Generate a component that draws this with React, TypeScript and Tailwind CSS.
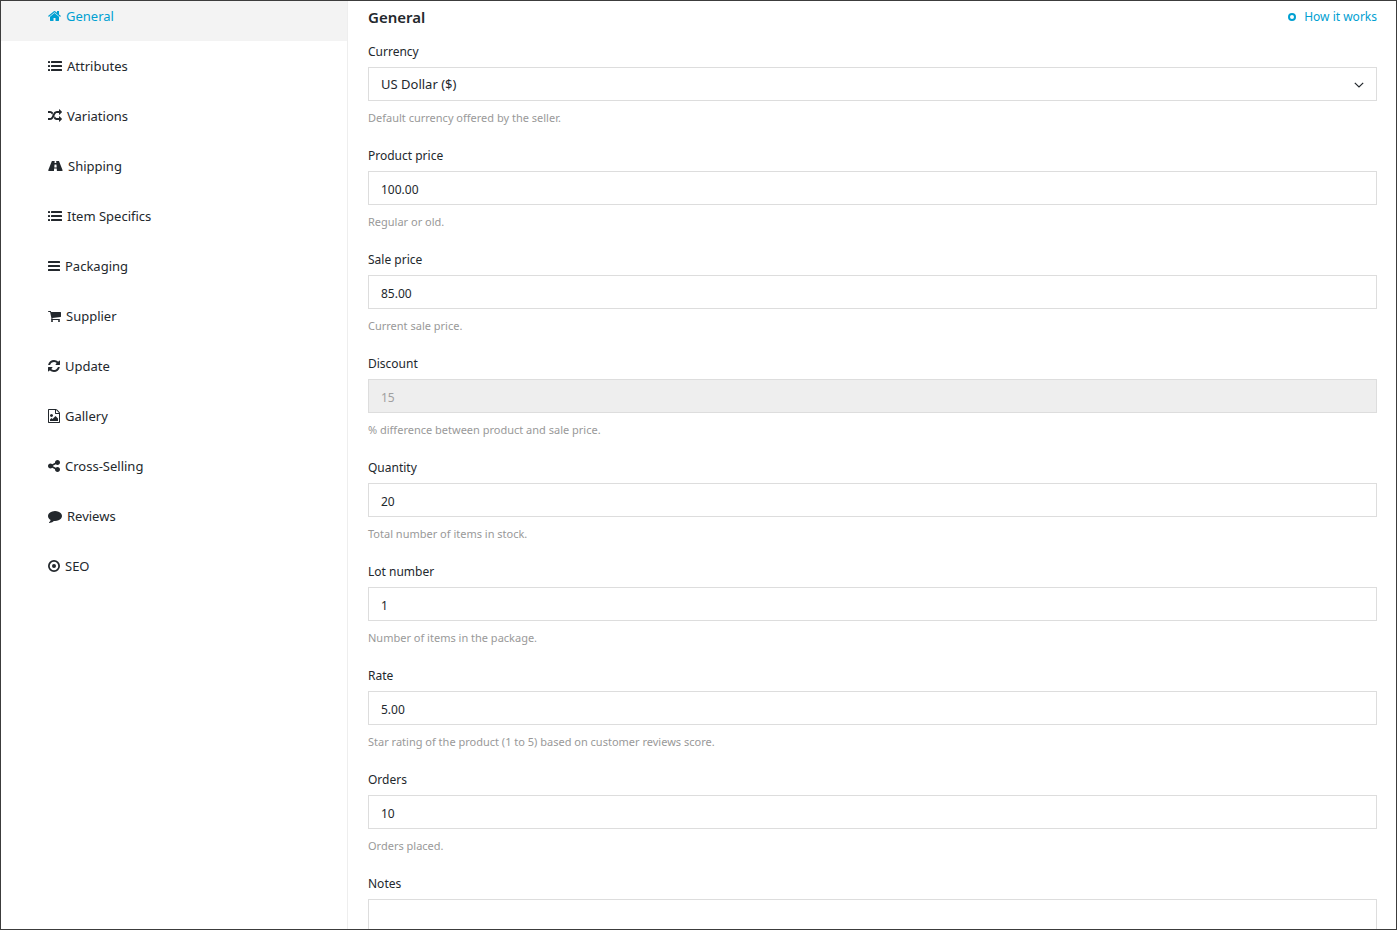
import React from "react";

type IconProps = { box: string; width: number; children: React.ReactNode };

function Icon({ box, width, children }: IconProps) {
  return (
    <svg viewBox={box} width={width} height={14} fill="currentColor" aria-hidden="true" className="shrink-0">
      {children}
    </svg>
  );
}

const WIDE = "0 0 1792 1792";
const MID = "64 0 1664 1792";
const SLIM = "128 0 1536 1792";

const HomeIcon = () => (
  <Icon box={MID} width={13}>
    <path d="M1472 992v480q0 26-19 45t-45 19h-384v-384h-256v384h-384q-26 0-45-19t-19-45v-480q0-1 .5-3t.5-3l575-474 575 474q1 2 1 6zm223-69l-62 74q-8 9-21 11h-3q-13 0-21-7l-692-577-692 577q-12 8-24 7-13-2-21-11l-62-74q-8-10-7-23.5t11-21.5l719-599q32-26 76-26t76 26l244 204v-195q0-14 9-23t23-9h192q14 0 23 9t9 23v408l219 182q10 8 11 21.5t-7 23.5z" />
  </Icon>
);

const ListIcon = () => (
  <Icon box={WIDE} width={14}>
    <rect x="0" y="256" width="256" height="256" rx="32" />
    <rect x="0" y="768" width="256" height="256" rx="32" />
    <rect x="0" y="1280" width="256" height="256" rx="32" />
    <rect x="384" y="256" width="1408" height="256" rx="32" />
    <rect x="384" y="768" width="1408" height="256" rx="32" />
    <rect x="384" y="1280" width="1408" height="256" rx="32" />
  </Icon>
);

const RandomIcon = () => (
  <Icon box={WIDE} width={14}>
    <path d="M666 481q-60 92-137 273-22-45-37-72.5t-40.5-63.5-51-56.5-63-35-81.5-14.5h-224q-14 0-23-9t-9-23v-192q0-14 9-23t23-9h224q250 0 410 225zm1126 799q0 14-9 23l-320 320q-9 9-23 9-13 0-22.5-9.5t-9.5-22.5v-192q-32 0-85 .5t-81 1-73-1-71-5-64-10.5-63-18.5-58-28.5-59-40-55-53.5-56-69.5q59-93 136-273 22 45 37 72.5t40.5 63.5 51 56.5 63 35 81.5 14.5h256v-192q0-14 9-23t23-9q12 0 24 10l319 319q9 9 9 23zm0-896q0 14-9 23l-320 320q-9 9-23 9-13 0-22.5-9.5t-9.5-22.5v-192h-256q-48 0-87 15t-69 45-51 61.5-45 77.5q-32 62-78 171-29 66-49.5 111t-54 105-64 100-74 83-90 68.5-106.5 42-128 16.5h-224q-14 0-23-9t-9-23v-192q0-14 9-23t23-9h224q48 0 87-15t69-45 51-61.5 45-77.5q32-62 78-171 29-66 49.5-111t54-105 64-100 74-83 90-68.5 106.5-42 128-16.5h256v-192q0-14 9-23t23-9q12 0 24 10l319 319q9 9 9 23z" />
  </Icon>
);

const RoadIcon = () => (
  <Icon box="0 0 1920 1792" width={15}>
    <path d="M1111 1056v-4l-24-320q-1-13-11-22.5t-23-9.5h-186q-13 0-23 9.5t-11 22.5l-24 320v4q-1 12 8 20t21 8h244q12 0 21-8t8-20zm749 407q0 73-46 73h-704q13 0 22-9.5t8-22.5l-20-256q-1-13-11-22.5t-23-9.5h-272q-13 0-23 9.5t-11 22.5l-20 256q-1 13 8 22.5t22 9.5h-704q-46 0-46-73 0-54 26-116l417-1044q8-19 26-33t38-14h339q-13 0-23 9.5t-11 22.5l-15 192q-1 14 8 23t22 9h166q13 0 22-9t8-23l-15-192q-1-13-11-22.5t-23-9.5h339q20 0 38 14t26 33l417 1044q26 62 26 116z" />
  </Icon>
);

const BarsIcon = () => (
  <Icon box={SLIM} width={12}>
    <rect x="128" y="256" width="1536" height="256" rx="32" />
    <rect x="128" y="768" width="1536" height="256" rx="32" />
    <rect x="128" y="1280" width="1536" height="256" rx="32" />
  </Icon>
);

const CartIcon = () => (
  <Icon box={MID} width={13}>
    <path d="M704 1536q0 52-38 90t-90 38-90-38-38-90 38-90 90-38 90 38 38 90zm896 0q0 52-38 90t-90 38-90-38-38-90 38-90 90-38 90 38 38 90zm128-1088v512q0 24-16.5 42.5t-40.5 21.5l-1044 122q13 60 13 70 0 16-24 64h920q26 0 45 19t19 45-19 45-45 19h-1024q-26 0-45-19t-19-45q0-11 8-31.5t16-36 21.5-40 15.5-29.5l-177-823h-204q-26 0-45-19t-19-45 19-45 45-19h256q16 0 28.5 6.5t19.5 15.5 13 24.5 8 26 5.5 29.5 4.5 26h1201q26 0 45 19t19 45z" />
  </Icon>
);

const RefreshIcon = () => (
  <Icon box={SLIM} width={12}>
    <path d="M1639 1056q0 5-1 7-64 268-268 434.5t-478 166.5q-146 0-282.5-55t-243.5-157l-129 129q-19 19-45 19t-45-19-19-45v-448q0-26 19-45t45-19h448q26 0 45 19t19 45-19 45l-137 137q71 66 161 102t187 36q134 0 250-65t186-179q11-17 53-117 8-23 30-23h192q13 0 22.5 9.5t9.5 22.5zm25-800v448q0 26-19 45t-45 19h-448q-26 0-45-19t-19-45 19-45l138-138q-148-137-349-137-134 0-250 65t-186 179q-11 17-53 117-8 23-30 23h-199q-13 0-22.5-9.5t-9.5-22.5v-7q65-268 270-434.5t480-166.5q146 0 284 55.5t245 156.5l130-129q19-19 45-19t45 19 19 45z" />
  </Icon>
);

const ImageFileIcon = () => (
  <Icon box={SLIM} width={12}>
    <path d="M1596 380q28 28 48 76t20 88v1152q0 40-28 68t-68 28h-1344q-40 0-68-28t-28-68v-1600q0-40 28-68t68-28h896q40 0 88 20t76 48zm-444-244v376h376q-10-29-22-41l-313-313q-12-12-41-22zm384 1528v-1024h-416q-40 0-68-28t-28-68v-416h-768v1536h1280zm-128-448v320h-1024v-192l192-192 128 128 384-384zm-832-192q-80 0-136-56t-56-136 56-136 136-56 136 56 56 136-56 136-136 56z" />
  </Icon>
);

const ShareIcon = () => (
  <Icon box={SLIM} width={12}>
    <path d="M1344 1024q133 0 226.5 93.5t93.5 226.5-93.5 226.5-226.5 93.5-226.5-93.5-93.5-226.5q0-12 2-34l-360-180q-92 86-218 86-133 0-226.5-93.5t-93.5-226.5 93.5-226.5 226.5-93.5q126 0 218 86l360-180q-2-22-2-34 0-133 93.5-226.5t226.5-93.5 226.5 93.5 93.5 226.5-93.5 226.5-226.5 93.5q-126 0-218-86l-360 180q2 22 2 34t-2 34l360 180q92-86 218-86z" />
  </Icon>
);

const CommentIcon = () => (
  <Icon box={WIDE} width={14}>
    <path d="M1792 896q0 174-120 321.5t-326 233-450 85.5q-70 0-145-8-198 175-460 242-49 14-114 22-17 2-30.5-9t-17.5-29v-1q-3-4-.5-12t2-10 4.5-9.5l6-9 7-8.5 8-9q7-8 31-34.5t34.5-38 31-39.5 32.5-51 27-59 26-76q-157-89-247.5-220t-90.5-281q0-130 71-248.5t191-204.5 286-136.5 348-50.5q244 0 450 85.5t326 233 120 321.5z" />
  </Icon>
);

const TargetIcon = () => (
  <Icon box={SLIM} width={12}>
    <circle cx="896" cy="896" r="656" fill="none" stroke="currentColor" strokeWidth="224" />
    <circle cx="896" cy="896" r="256" />
  </Icon>
);

const NAV = [
  { label: "General", icon: HomeIcon, active: true },
  { label: "Attributes", icon: ListIcon },
  { label: "Variations", icon: RandomIcon },
  { label: "Shipping", icon: RoadIcon },
  { label: "Item Specifics", icon: ListIcon },
  { label: "Packaging", icon: BarsIcon },
  { label: "Supplier", icon: CartIcon },
  { label: "Update", icon: RefreshIcon },
  { label: "Gallery", icon: ImageFileIcon },
  { label: "Cross-Selling", icon: ShareIcon },
  { label: "Reviews", icon: CommentIcon },
  { label: "SEO", icon: TargetIcon },
];

const FIELDS = [
  { id: "product-price", label: "Product price", value: "100.00", help: "Regular or old." },
  { id: "sale-price", label: "Sale price", value: "85.00", help: "Current sale price." },
  { id: "discount", label: "Discount", value: "15", help: "% difference between product and sale price.", disabled: true },
  { id: "quantity", label: "Quantity", value: "20", help: "Total number of items in stock." },
  { id: "lot-number", label: "Lot number", value: "1", help: "Number of items in the package." },
  { id: "rate", label: "Rate", value: "5.00", help: "Star rating of the product (1 to 5) based on customer reviews score." },
  { id: "orders", label: "Orders", value: "10", help: "Orders placed." },
];

function Field({ id, label, help, children }: { id: string; label: string; help?: string; children: React.ReactNode }) {
  return (
    <div className="mb-[18px] flex flex-col">
      <label htmlFor={id} className="mb-1 self-start text-[12px] leading-[22px]">
        {label}
      </label>
      {children}
      {help && (
        <p id={`${id}-help`} className="mt-2 text-[11px] leading-[18px] text-[#999999]">
          {help}
        </p>
      )}
    </div>
  );
}

export default function App() {
  return (
    <div className="flex h-screen overflow-hidden border border-[#3c3c3c] bg-white font-['Noto_Sans',sans-serif] text-[#23282d]">
      <nav aria-label="Product sections" className="w-[347px] shrink-0 border-r border-[#eeeeee]">
        <ul className="-mt-2.5">
          {NAV.map(({ label, icon: Glyph, active }) => (
            <li key={label}>
              <a
                href="#"
                aria-current={active ? "page" : undefined}
                className={`flex h-[50px] items-center gap-[5px] pl-[47px] text-[13px] leading-5 ${
                  active ? "bg-[#f3f3f3] text-[#00a0d2]" : ""
                }`}
              >
                <Glyph />
                {label}
              </a>
            </li>
          ))}
        </ul>
      </nav>

      <main className="min-w-0 flex-1 pl-5 pr-[19px]">
        <header className="mb-2 flex h-8 items-center justify-between">
          <h1 className="text-[15px] font-semibold leading-6">General</h1>
          <a href="#" className="flex items-center gap-2 text-[12px] leading-5 text-[#00a0d2]">
            <svg viewBox="0 0 8 8" width="8" height="8" aria-hidden="true">
              <circle cx="4" cy="4" r="3" fill="none" stroke="currentColor" strokeWidth="2" />
            </svg>
            How it works
          </a>
        </header>

        <form>
          <Field id="currency" label="Currency" help="Default currency offered by the seller.">
            <div className="relative flex">
              <select
                id="currency"
                aria-describedby="currency-help"
                className="h-[34px] w-full appearance-none border border-[#dddddd] bg-white px-3 pt-0.5 text-[13px]"
              >
                <option>US Dollar ($)</option>
              </select>
              <svg
                viewBox="0 0 10 6"
                width="10"
                height="6"
                aria-hidden="true"
                className="pointer-events-none absolute right-[13px] top-[15px]"
              >
                <path d="M.8.8 5 5 9.2.8" fill="none" stroke="currentColor" strokeWidth="1.2" />
              </svg>
            </div>
          </Field>

          {FIELDS.map((f) => (
            <Field key={f.id} id={f.id} label={f.label} help={f.help}>
              <input
                id={f.id}
                type="text"
                defaultValue={f.value}
                disabled={f.disabled}
                aria-describedby={`${f.id}-help`}
                className="h-[34px] w-full border border-[#dddddd] bg-white px-3 pt-0.5 text-[12px] disabled:bg-[#eeeeee] disabled:text-[#a0a0a0]"
              />
            </Field>
          ))}

          <Field id="notes" label="Notes">
            <textarea id="notes" rows={4} className="w-full resize-none border border-[#dddddd] bg-white px-3 py-2 text-[12px]" />
          </Field>
        </form>
      </main>
    </div>
  );
}
